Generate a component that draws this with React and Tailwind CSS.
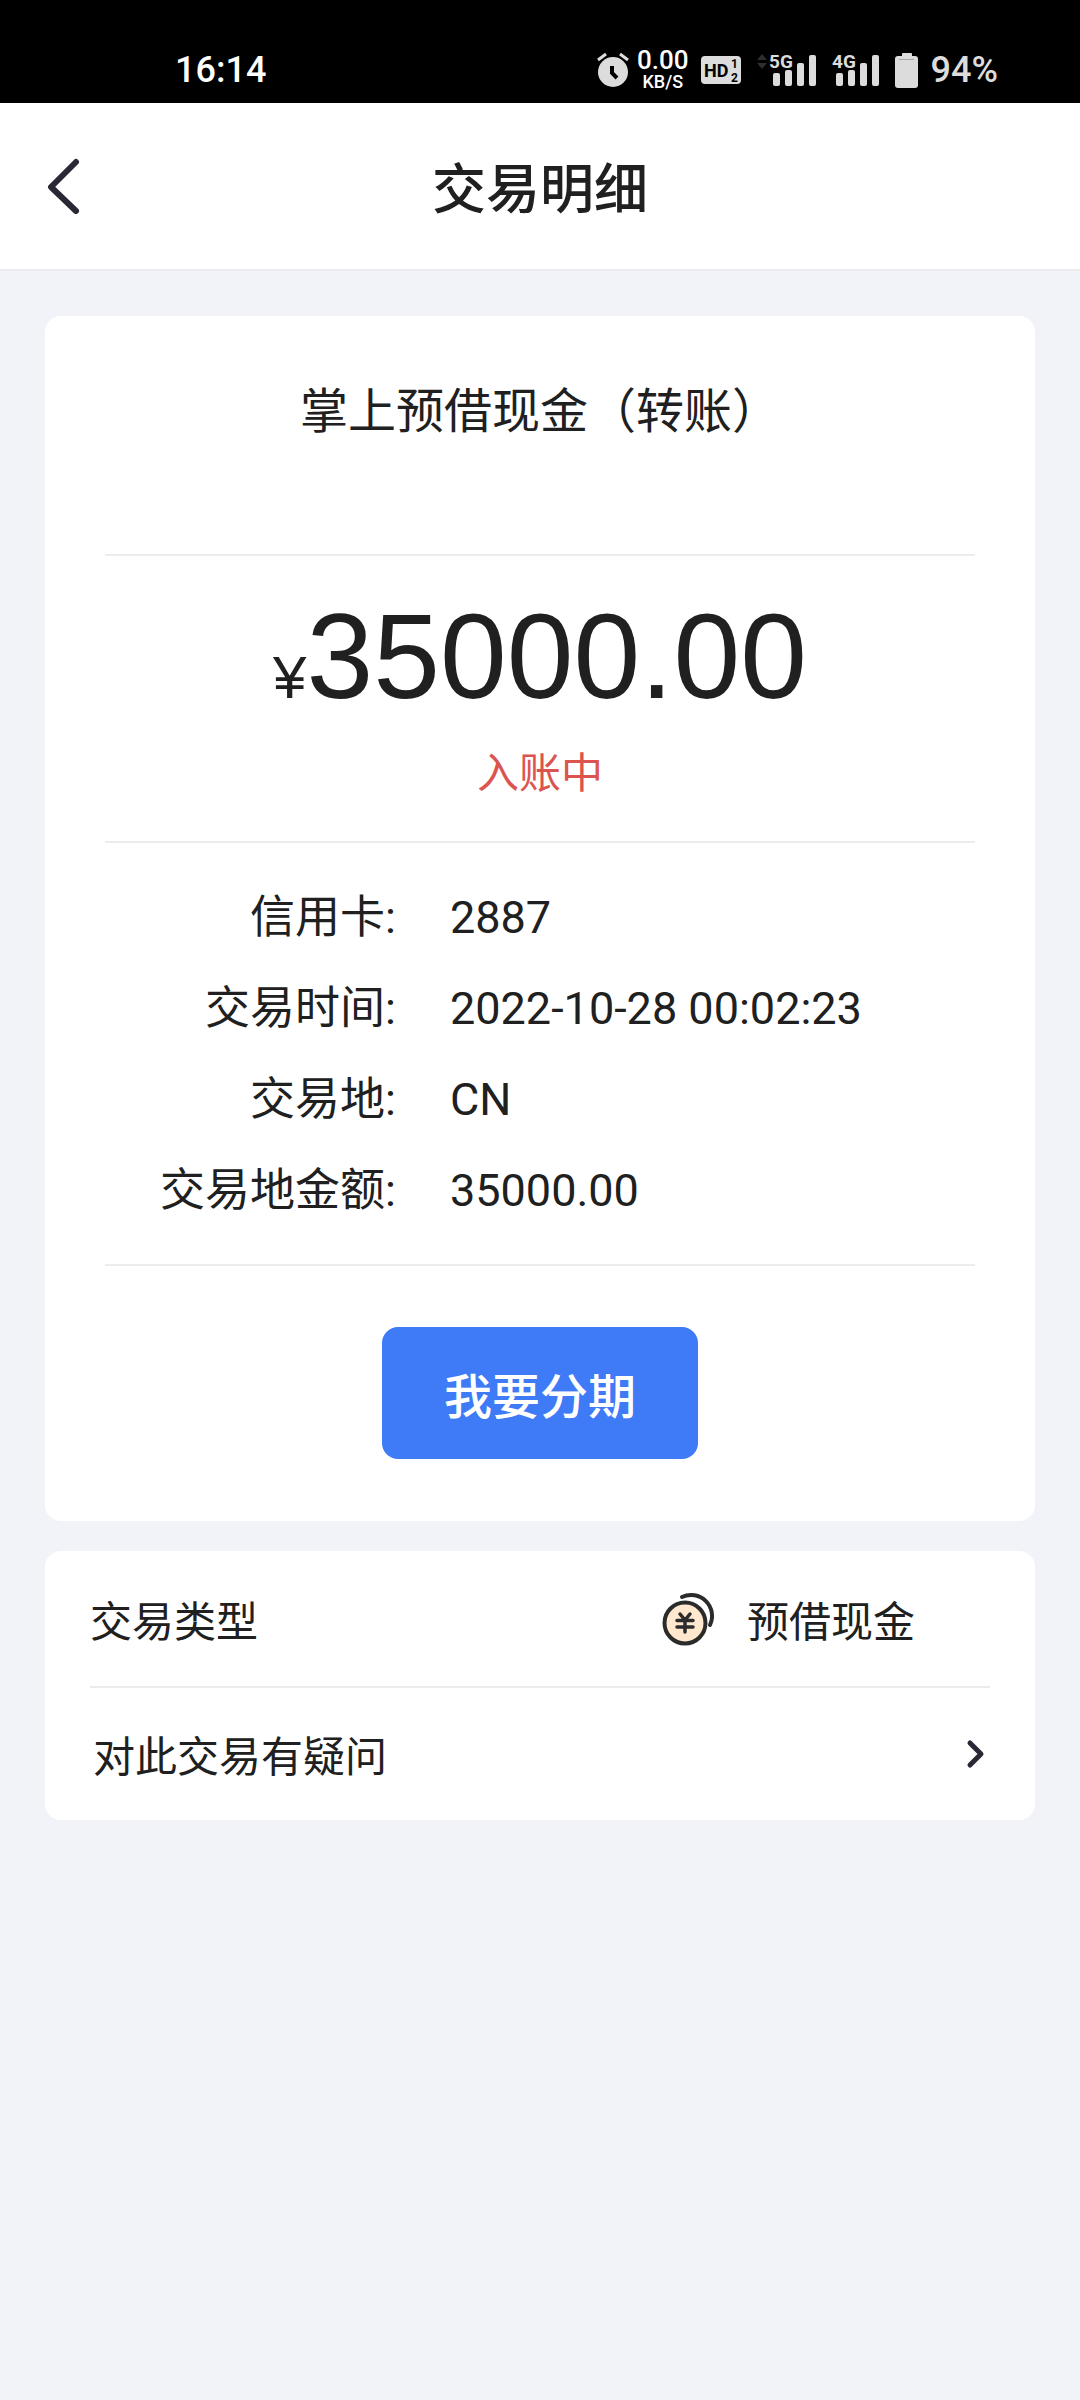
import { useState } from 'react'

const details = [
  { label: '信用卡', value: '2887' },
  { label: '交易时间', value: '2022-10-28 00:02:23' },
  { label: '交易地', value: 'CN' },
  { label: '交易地金额', value: '35000.00' },
]

function AlarmIcon() {
  return (
    <svg width="32" height="36" viewBox="0 0 32 36" aria-hidden="true">
      <circle cx="16" cy="20" r="15" fill="#dcdcdc" />
      <path d="M1 8 L9 2 M31 8 L23 2" stroke="#dcdcdc" strokeWidth="3" fill="none" />
      <path d="M15 14 V21 L20 26" stroke="#000" strokeWidth="4" fill="none" />
    </svg>
  )
}

function HdIcon() {
  return (
    <svg width="40" height="28" viewBox="0 0 40 28" aria-label="HD">
      <rect width="40" height="28" rx="4" fill="#dcdcdc" />
      <text x="3" y="21" fontSize="18" fontWeight="700" fill="#000">HD</text>
      <text x="30" y="12" fontSize="12" fontWeight="700" fill="#000">1</text>
      <text x="30" y="26" fontSize="12" fontWeight="700" fill="#000">2</text>
    </svg>
  )
}

function SignalIcon({ network }) {
  return (
    <svg width="47" height="42" viewBox="0 -4 47 42" aria-label={network}>
      <rect x="4" y="20" width="7" height="13" rx="2" fill="#dcdcdc" />
      <rect x="16" y="17" width="7" height="16" rx="2" fill="#dcdcdc" />
      <rect x="28" y="10" width="7" height="23" rx="2" fill="#dcdcdc" />
      <rect x="40" y="2" width="7" height="31" rx="2" fill="#dcdcdc" />
      <text x="0" y="15" fontSize="19" fontWeight="700" fill="#dcdcdc">{network}</text>
    </svg>
  )
}

function DataArrows() {
  return (
    <svg width="12" height="34" viewBox="0 0 12 34" aria-hidden="true">
      <path d="M0 7 L5 1 L10 7 Z M0 10 L5 16 L10 10 Z" fill="#2e2e2e" />
    </svg>
  )
}

function BatteryIcon() {
  return (
    <svg width="24" height="36" viewBox="0 0 24 36" aria-hidden="true">
      <rect x="7" y="1" width="10" height="6" rx="1" fill="#dcdcdc" />
      <rect x="0" y="4" width="23" height="32" rx="3" fill="#dcdcdc" />
      <path d="M4 7.5 H19" stroke="#a8a8a8" strokeWidth="1" />
    </svg>
  )
}

function CoinIcon() {
  return (
    <svg width="56" height="56" viewBox="0 0 56 56" fill="none" stroke="#2b2b2b" strokeWidth="4" strokeLinecap="round" strokeLinejoin="round" aria-hidden="true">
      <path d="M21 6 A21 21 0 0 1 49 34" />
      <circle cx="24" cy="32" r="20.5" fill="#ffe8cd" />
      <path d="M19 23 L24 29 L29 23 M16 29.5 H32 M16 36 H32 M24 29 V41" strokeWidth="3.5" />
    </svg>
  )
}

function StatusBar() {
  return (
    <div className="flex h-[103px] items-center justify-between bg-black pt-9 pr-[82px] pl-[175px] font-['Roboto',sans-serif] text-[#dcdcdc]">
      <span className="text-[36px] leading-[44px] font-medium text-white">16:14</span>
      <div className="flex items-center">
        <AlarmIcon />
        <div className="ml-2 flex flex-col items-center font-medium text-white">
          <span className="text-[26px] leading-[24px]">0.00</span>
          <span className="text-[18px] leading-[20px]">KB/S</span>
        </div>
        <div className="mr-4 ml-3">
          <HdIcon />
        </div>
        <DataArrows />
        <SignalIcon network="5G" />
        <div className="mr-4 ml-4">
          <SignalIcon network="4G" />
        </div>
        <BatteryIcon />
        <span className="ml-3 text-[36px] leading-[44px] font-medium">94%</span>
      </div>
    </div>
  )
}

export default function App() {
  const [installment, setInstallment] = useState(false)

  return (
    <div
      lang="zh-CN"
      className="min-h-screen bg-[#f2f3f8] pb-10 font-['Noto_Sans_CJK_SC',sans-serif] text-[#202020]"
    >
      <StatusBar />

      <header className="grid h-[168px] grid-cols-[1fr_auto_1fr] items-center border-b-2 border-[#ebecee] bg-white px-[45px]">
        <button type="button" aria-label="返回" className="justify-self-start">
          <svg width="36" height="56" viewBox="0 0 36 56" fill="none" stroke="#2b2836" strokeWidth="6" strokeLinecap="round" strokeLinejoin="round">
            <path d="M31 4 L6 29 L31 53" />
          </svg>
        </button>
        <h1 className="text-[54px] leading-[72px] font-medium">交易明细</h1>
      </header>

      <main className="mx-[45px] mt-[45px]">
        <section className="rounded-2xl bg-white px-[60px] pt-[55px] pb-[62px]">
          <h2 className="pb-[111px] text-center text-[48px] leading-[72px]">掌上预借现金（转账）</h2>

          <div className="border-y-2 border-[#ececec] pt-10 pb-[41px] text-center">
            <p className="font-['Liberation_Sans',sans-serif] text-[120px] leading-[120px]">
              <span className="text-[60px] leading-[60px]">¥</span>35000.00
            </p>
            <p className="mt-6 text-[42px] leading-[60px] text-[#dc5450]">入账中</p>
          </div>

          <dl className="border-b-2 border-[#ececec] pt-[29px] pb-7 font-['Roboto','Noto_Sans_CJK_SC',sans-serif] text-[45px] leading-[91px]">
            {details.map((item) => (
              <div key={item.label} className="grid grid-cols-[291px_1fr] gap-[54px]">
                <dt className="text-right">{item.label}:</dt>
                <dd>{item.value}</dd>
              </div>
            ))}
          </dl>

          <div className="mt-[61px] flex justify-center">
            <button
              type="button"
              aria-pressed={installment}
              onClick={() => setInstallment(!installment)}
              className="h-[132px] rounded-2xl bg-[#3f7af7] px-[62px] text-[48px] leading-[72px] font-medium text-white"
            >
              我要分期
            </button>
          </div>
        </section>

        <section className="mt-[30px] rounded-2xl bg-white px-[45px] text-[42px] leading-[60px]">
          <div className="flex h-[137px] items-center justify-between border-b-2 border-[#ececec] pr-[75px]">
            <span>交易类型</span>
            <span className="flex items-center gap-[30px]">
              <CoinIcon />
              预借现金
            </span>
          </div>
          <a href="#question" className="flex h-[132px] items-center justify-between px-[3px]">
            <span>对此交易有疑问</span>
            <svg width="22" height="32" viewBox="0 0 22 32" fill="none" stroke="#2b2836" strokeWidth="5" strokeLinecap="round" strokeLinejoin="round" aria-hidden="true">
              <path d="M5 5 L16 16 L5 27" />
            </svg>
          </a>
        </section>
      </main>
    </div>
  )
}
